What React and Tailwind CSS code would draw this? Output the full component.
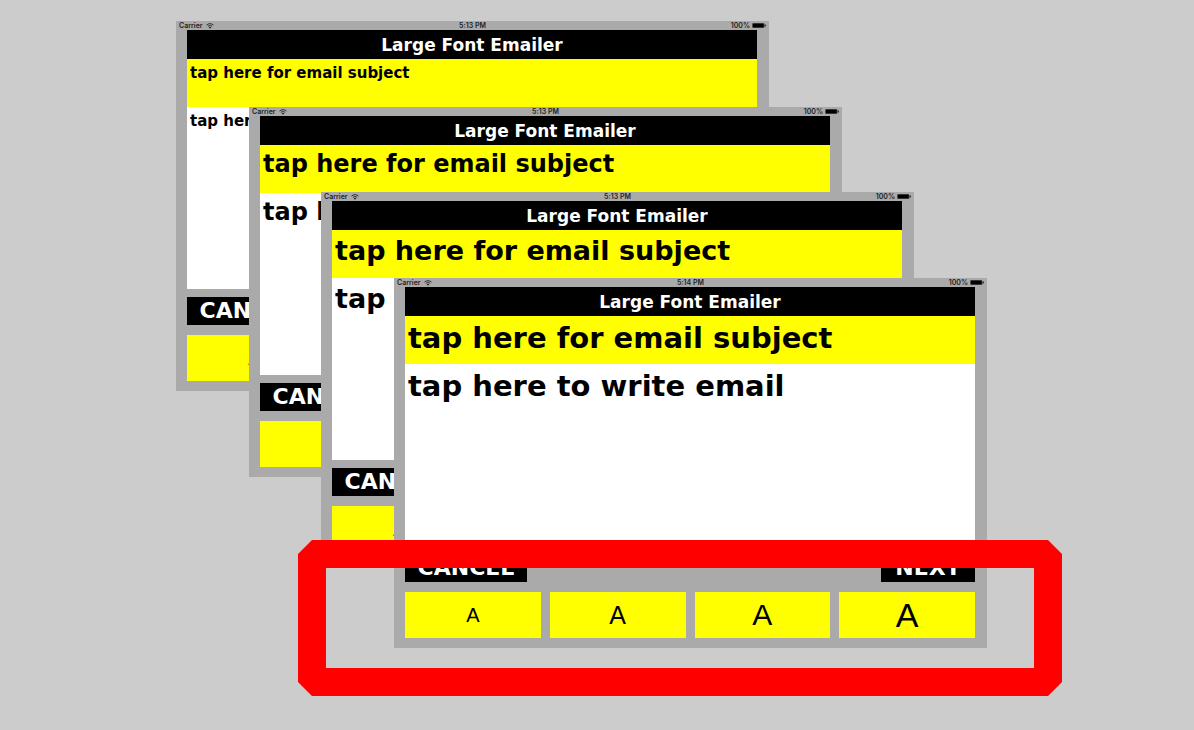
import React from "react";

const screens = [
  { id: "small", time: "5:13 PM", place: "left-[176px] top-[21px]", text: "text-[15px] leading-[18px]" },
  { id: "medium", time: "5:13 PM", place: "left-[249px] top-[107px]", text: "text-[24px] leading-[29px]" },
  { id: "large", time: "5:13 PM", place: "left-[321px] top-[192px]", text: "text-[27px] leading-[32px]" },
  { id: "huge", time: "5:14 PM", place: "left-[394px] top-[278px]", text: "text-[29px] leading-[35px]" },
];

const sizes = [
  { name: "Small", text: "text-[20px]" },
  { name: "Medium", text: "text-[25px]" },
  { name: "Large", text: "text-[30px]" },
  { name: "Huge", text: "text-[34px]" },
];

function Wifi() {
  return (
    <svg className="h-[6px] w-[8px]" viewBox="0 0 16 12" fill="none" stroke="#222" strokeWidth="1.8" aria-hidden="true">
      <path d="M1 4.2C5 .4 11 .4 15 4.2" />
      <path d="M3.6 7C6.2 4.6 9.8 4.6 12.4 7" />
      <path d="M8 11.5 5.6 9c1.4-1.2 3.4-1.2 4.8 0Z" fill="#222" stroke="none" />
    </svg>
  );
}

function Battery() {
  return (
    <svg className="h-[5px] w-[14px]" viewBox="0 0 28 10" aria-hidden="true">
      <rect x=".5" y=".5" width="24" height="9" rx="2" fill="#666" stroke="#555" />
      <rect x="1.5" y="1" width="22" height="8" rx="1" fill="#000" />
      <path d="M25.5 2.5c2.8 0 2.8 5 0 5Z" fill="#111" />
    </svg>
  );
}

function StatusBar({ time }) {
  return (
    <div className="grid h-[9px] grid-cols-3 items-center px-[3px] font-['Inter',sans-serif] text-[7px] leading-[9px] font-semibold text-[#222]">
      <span className="flex items-center gap-[3px]">
        Carrier <Wifi />
      </span>
      <span className="text-center">{time}</span>
      <span className="flex items-center justify-end gap-[2px]">
        100% <Battery />
      </span>
    </div>
  );
}

function EmailScreen({ id, time, place, text }) {
  return (
    <section className={`absolute w-[593px] bg-[#aaaaaa] pb-[10px] ${place}`}>
      <StatusBar time={time} />
      <form className="pr-[12px] pl-[11px]" onSubmit={(e) => e.preventDefault()}>
        <h2 className="bg-black pt-[2px] text-center text-[17px] leading-[27px] font-bold text-white">Large Font Emailer</h2>
        <div className="h-[48px] bg-[#ffff00] px-[3px] pt-[5px]">
          <input
            id={`subject-${id}`}
            aria-label="Email subject"
            placeholder="tap here for email subject"
            className={`block w-full bg-transparent font-bold text-black outline-none placeholder:text-black placeholder:opacity-100 ${text}`}
          />
        </div>
        <textarea
          id={`body-${id}`}
          aria-label="Email body"
          placeholder="tap here to write email"
          className={`block h-[182px] w-full resize-none bg-white px-[3px] pt-[5px] font-bold text-black outline-none placeholder:text-black placeholder:opacity-100 ${text}`}
        />
        <div className="mt-[8px] flex justify-between text-[22px] leading-[28px] font-bold text-white">
          <button type="button" className="w-[122px] bg-black">CANCEL</button>
          <button type="submit" className="w-[94px] bg-black">NEXT</button>
        </div>
        <div className="mt-[10px] grid grid-cols-4 gap-[9px] font-['Liberation_Sans',sans-serif]">
          {sizes.map((size) => (
            <button
              key={size.name}
              type="button"
              title={size.name}
              className={`h-[46px] bg-[#ffff00] leading-[46px] text-black ${size.text}`}
            >
              A
            </button>
          ))}
        </div>
      </form>
    </section>
  );
}

export default function App() {
  return (
    <main className="relative min-h-screen w-full overflow-hidden bg-[#cccccc] font-['DejaVu_Sans',sans-serif]">
      {screens.map((screen) => (
        <EmailScreen key={screen.id} {...screen} />
      ))}
      <svg
        className="pointer-events-none absolute top-[540px] left-[298px] h-[156px] w-[764px]"
        viewBox="0 0 764 156"
        aria-hidden="true"
      >
        <rect x="14" y="14" width="736" height="128" fill="none" stroke="#ff0000" strokeWidth="28" strokeLinejoin="bevel" />
      </svg>
    </main>
  );
}
